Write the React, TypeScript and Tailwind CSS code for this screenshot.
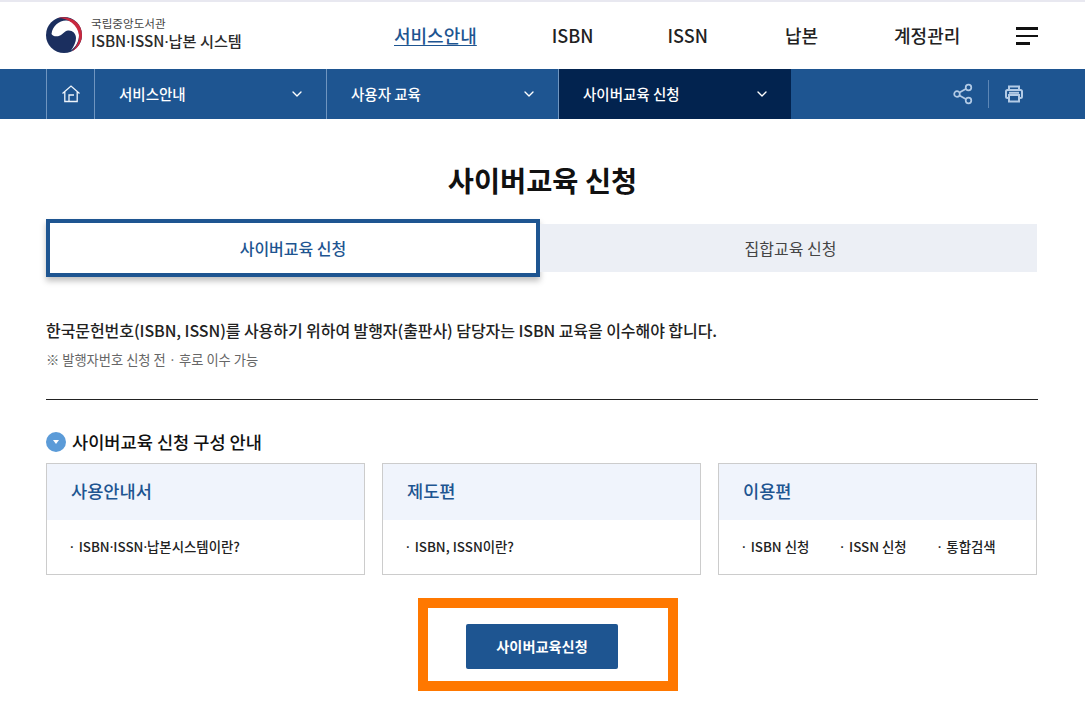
import React from "react";
import { ChevronDown } from "lucide-react";

const navItems = [
    { label: "서비스안내", className: "mr-[75px] text-[#1e5591] underline underline-offset-2" },
    { label: "ISBN", className: "mr-[74px]" },
    { label: "ISSN", className: "mr-[77px]" },
    { label: "납본", className: "mr-[76px]" },
    { label: "계정관리", className: "mr-[77px]" },
];

// the middle dot of the CJK face is full width, the reference has a narrow one
function withDots(text: string) {
    return text.split("·").map((part, i) => (
        <React.Fragment key={i}>
            {i > 0 && <span className="font-['Noto_Sans']">·</span>}
            {part}
        </React.Fragment>
    ));
}

function Logo() {
    return (
        <svg width="36" height="36" viewBox="0 0 36 36" className="mb-[2px] shrink-0">
            <circle cx="18" cy="18" r="18" fill="#1b2f5f" />
            <path d="M5.500 17C6.500 9 13 3.500 20 3.500C28 3.500 33 11 33 18C33 25 29.500 30 25 33.500C28 29 30 25 30 21C30 16 26 13 22 13.500C18.500 14 17 17 14 18.500C10.500 20 7 19.500 5.500 17z" fill="#fff" />
            <path d="M12 1C22-2 36 4 36 18C36 25 32 31 26 34.500C31 29 33.500 24 33 18C32 8 22 1 12 1z" fill="#c9283e" />
        </svg>
    );
}

function ShareIcon() {
    return (
        <svg width="20" height="22" viewBox="0 0 20 22" fill="none" stroke="#b3cbe6" strokeWidth="1.700">
            <circle cx="15.500" cy="4.500" r="2.800" />
            <circle cx="4" cy="11" r="2.800" />
            <circle cx="15.500" cy="17.500" r="2.800" />
            <path d="M6.500 9.600l6.600-3.800M6.500 12.400l6.600 3.800" />
        </svg>
    );
}

function PrintIcon() {
    return (
        <svg width="18" height="18" viewBox="0 0 18 18" fill="none" stroke="#b3cbe6" strokeWidth="2">
            <path d="M4 5V1.500h10V5" />
            <rect x="1" y="5" width="16" height="8" rx="1.500" />
            <rect x="4" y="10" width="10" height="6.500" fill="#1e5591" />
            <path d="M4 7.800h10" />
        </svg>
    );
}

function Crumb({ label, active, width }: { label: string; active?: boolean; width: string }) {
    return (
        <div className={`flex h-full items-center justify-between border-l border-[#6f95c0] pl-[24px] pr-[21px] text-[14.500px] font-medium text-white ${width} ${active ? "bg-[#02234f]" : ""}`}>
            <span className="mb-[1px]">{label}</span>
            <ChevronDown size={16} strokeWidth={2} className="mb-[1px]" />
        </div>
    );
}

function Card({ title, items }: { title: string; items: string[] }) {
    return (
        <div className="h-[112px] w-[319px] border border-[#cccccc]">
            <div className="flex h-[56px] items-center bg-[#f0f4fc] pb-[1px] pl-[24px] text-[17.600px] font-medium text-[#1e5591]">
                {title}
            </div>
            <div className="flex h-[54px] items-center gap-[31px] pl-[23px] text-[13.400px] font-medium text-[#222222]">
                {items.map((item) => (
                    <span key={item}>
                        <span className="mr-[5px] font-['Noto_Sans']">·</span>
                        {withDots(item)}
                    </span>
                ))}
            </div>
        </div>
    );
}

export default function App() {
    return (
        <div className="h-[705px] w-[1085px] overflow-hidden bg-white font-['Noto_Sans_CJK_KR',sans-serif] text-[#111111]">
            <div className="h-[2px] bg-[#e8e8f0]" />
            <header className="flex h-[67px] items-center pl-[46px]">
                <Logo />
                <div className="mb-[4px] ml-[9px] w-[303px]">
                    <div className="text-[11.600px] leading-[15px] text-[#444444]">국립중앙도서관</div>
                    <div className="text-[15.200px] font-medium leading-[19px] text-[#2b2b2b]">{withDots("ISBN·ISSN·납본 시스템")}</div>
                </div>
                <nav className="flex items-center text-[18px] font-medium text-[#222222]">
                    {navItems.map((item) => (
                        <a key={item.label} className={item.className}>
                            {item.label}
                        </a>
                    ))}
                </nav>
                <div className="-ml-[21px] flex w-[22px] flex-col gap-[5px]">
                    <div className="h-[3px] w-[22px] bg-[#111111]" />
                    <div className="h-[2px] w-[22px] bg-[#111111]" />
                    <div className="h-[3px] w-[14px] bg-[#111111]" />
                </div>
            </header>
            <div className="flex h-[50px] items-center bg-[#1e5591] pl-[46px]">
                <div className="flex h-full w-[48px] items-center justify-center border-l border-[#6f95c0]">
                    <svg width="20" height="20" viewBox="0 0 20 20" fill="none" stroke="#eef4fb" strokeWidth="1.300">
                        <path d="M1.500 9.500L10 2l8.500 7.500M3.800 8v9.500h12.400V8M8 17v-6h5" />
                    </svg>
                </div>
                <Crumb label="서비스안내" width="w-[232px]" />
                <Crumb label="사용자 교육" width="w-[232px]" />
                <Crumb label="사이버교육 신청" active width="w-[233px]" />
                <div className="ml-auto flex items-center pr-[62px]">
                    <ShareIcon />
                    <div className="ml-[15px] mr-[16px] h-[28px] w-px bg-[#5d87b6]" />
                    <PrintIcon />
                </div>
            </div>
            <main className="px-[46px]">
                <h1 className="mt-[38px] text-center text-[28.400px] font-bold leading-[46px] text-[#111111]">사이버교육 신청</h1>
                <div className="mt-[16px] flex h-[58px] w-[991px] items-center">
                    <div className="flex h-[58px] w-[494px] items-center justify-center border-[4px] border-[#1e5591] bg-white text-[16px] font-medium text-[#1e5591] shadow-[0_4px_6px_rgba(0,0,0,0.25)]">
                        사이버교육 신청
                    </div>
                    <div className="flex h-[48px] flex-1 items-center justify-center bg-[#eceff5] pl-[4px] text-[16px] text-[#444444]">
                        집합교육 신청
                    </div>
                </div>
                <p className="mt-[41px] text-[16px] font-medium leading-[24px] tracking-[-0.07px] text-[#222222]">
                    한국문헌번호(ISBN, ISSN)를 사용하기 위하여 발행자(출판사) 담당자는 ISBN 교육을 이수해야 합니다.
                </p>
                <p className="mt-[8px] text-[13.250px] leading-[20px] text-[#666666]">※ 발행자번호 신청 전 · 후로 이수 가능</p>
                <div className="mt-[29px] h-px w-[992px] bg-[#222222]" />
                <div className="mt-[30px] flex h-[24px] items-center gap-[6px]">
                    <div className="flex h-[20px] w-[20px] items-center justify-center rounded-full bg-[#5b9bd8]">
                        <div className="h-0 w-0 border-x-[3.500px] border-t-[4px] border-x-transparent border-t-white" />
                    </div>
                    <h2 className="text-[17.600px] font-medium text-[#111111]">사이버교육 신청 구성 안내</h2>
                </div>
                <div className="mt-[9px] flex w-[991px] justify-between">
                    <Card title="사용안내서" items={["ISBN·ISSN·납본시스템이란?"]} />
                    <Card title="제도편" items={["ISBN, ISSN이란?"]} />
                    <Card title="이용편" items={["ISBN 신청", "ISSN 신청", "통합검색"]} />
                </div>
                <div className="mt-[23px] pl-[372px]">
                    <div className="h-[93px] w-[260px] border-[10px] border-[#ff7800] pl-[38px] pt-[16px]">
                        <button className="block h-[45px] w-[152px] rounded-[2px] bg-[#1e5591] text-[14.200px] font-bold text-white">사이버교육신청</button>
                    </div>
                </div>
            </main>
        </div>
    );
}
